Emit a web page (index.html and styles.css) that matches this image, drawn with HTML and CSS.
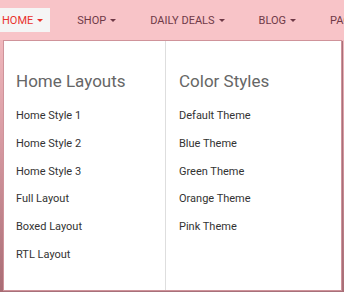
FILE: index.html
```html
<!DOCTYPE html>
<html>
<head>
<meta charset="utf-8">
<link rel="stylesheet" href="styles.css">
</head>
<body>
<header class="topbar">
  <nav class="nav">
    <a class="nav-item active">HOME <span class="caret"></span></a>
    <a class="nav-item">SHOP <span class="caret"></span></a>
    <a class="nav-item">DAILY DEALS <span class="caret"></span></a>
    <a class="nav-item">BLOG <span class="caret"></span></a>
    <a class="nav-item">PAGES <span class="caret"></span></a>
  </nav>
</header>
<div class="hero"></div>
<div class="mega">
  <div class="col col-first">
    <h3 class="col-title">Home Layouts</h3>
    <ul class="col-list">
      <li>Home Style 1</li>
      <li>Home Style 2</li>
      <li>Home Style 3</li>
      <li>Full Layout</li>
      <li>Boxed Layout</li>
      <li>RTL Layout</li>
    </ul>
  </div>
  <div class="col col-second">
    <h3 class="col-title">Color Styles</h3>
    <ul class="col-list">
      <li>Default Theme</li>
      <li>Blue Theme</li>
      <li>Green Theme</li>
      <li>Orange Theme</li>
      <li>Pink Theme</li>
    </ul>
  </div>
</div>
</body>
</html>
```

FILE: styles.css
```css
* { box-sizing: border-box; }
html, body {
  margin: 0;
  padding: 0;
  width: 344px;
  height: 292px;
  overflow: hidden;
}
body {
  background: #f8c4c8;
  font-family: Roboto, "Liberation Sans", sans-serif;
  position: relative;
}
.topbar {
  height: 40px;
  background: #f8c4c8;
  display: flex;
  align-items: center;
  overflow: hidden;
}
.nav {
  display: flex;
  gap: 25px;
  white-space: nowrap;
}
.nav-item {
  flex-shrink: 0;
  display: flex;
  align-items: center;
  height: 24px;
  padding: 0 7px 0 2px;
  font-size: 11px;
  color: #6f3947;
  text-decoration: none;
}
.nav-item.active {
  background: #f5f5f5;
  color: #e9322d;
}
.caret {
  display: inline-block;
  width: 0;
  height: 0;
  margin-left: 4px;
  margin-top: 1px;
  border-left: 3px solid transparent;
  border-right: 3px solid transparent;
  border-top: 3px solid currentColor;
}
.hero {
  height: 252px;
  background: linear-gradient(180deg, #f0b8bd 0%, #d79aa2 40%, #a86c74 100%);
}
.mega {
  position: absolute;
  left: 3px;
  top: 40px;
  width: 339px;
  height: 251px;
  background: #fff;
  border: 1px solid #cf939a;
  display: flex;
  box-shadow: 1px 1px 0 #a8707a;
}
.col {
  padding-top: 30px;
}
.col-first {
  width: 162px;
  padding-left: 12px;
  border-right: 1px solid #dedede;
}
.col-second {
  flex: 1;
  padding-left: 13px;
}
.col-title {
  margin: 0 0 11px;
  font-size: 17px;
  line-height: 20px;
  font-weight: 400;
  color: #666;
}
.col-list {
  list-style: none;
  margin: 0;
  padding: 0;
}
.col-list li {
  font-size: 11px;
  line-height: 27.8px;
  color: #333;
}
```
